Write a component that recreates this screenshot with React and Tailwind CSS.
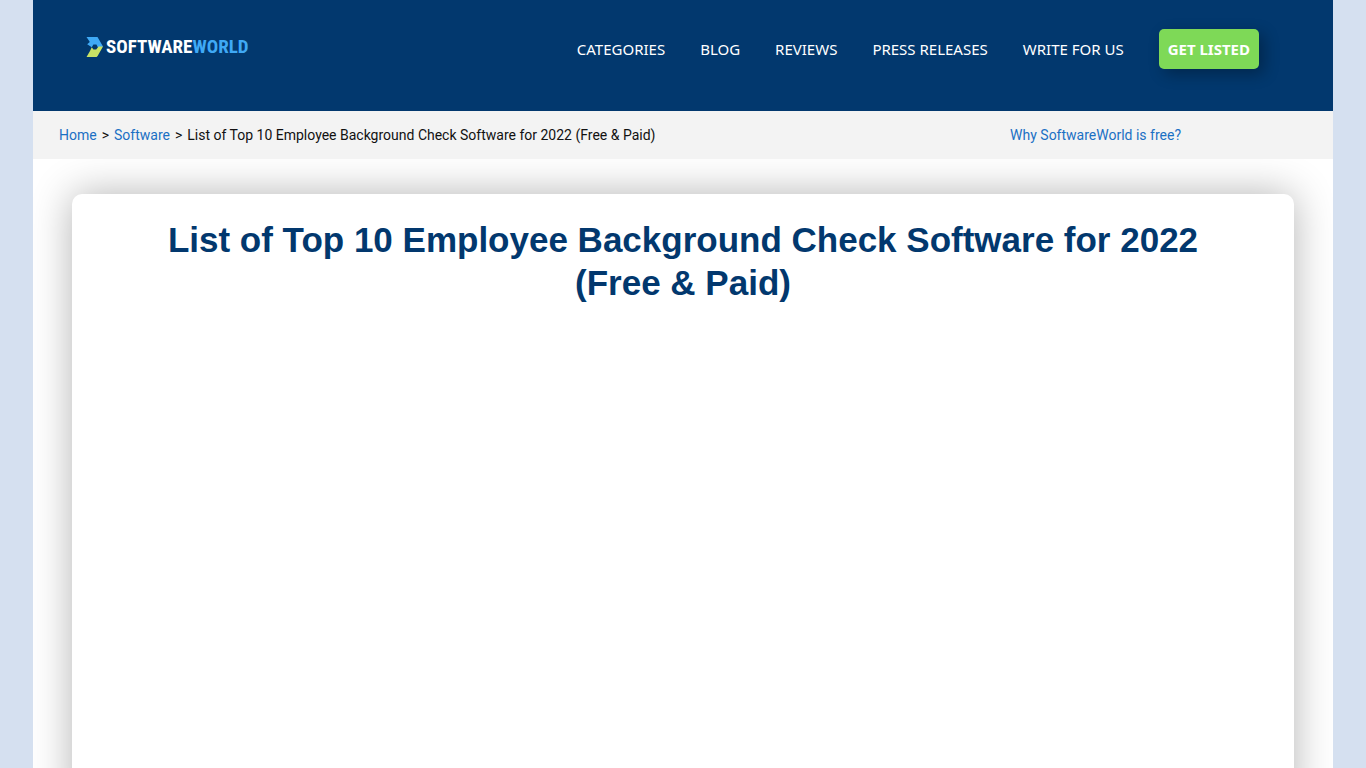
const navLinks = ["CATEGORIES", "BLOG", "REVIEWS", "PRESS RELEASES", "WRITE FOR US"];

function Logo() {
  return (
    <a href="#" aria-label="SoftwareWorld home" className="flex h-5 items-center gap-[3px]">
      <svg width="17" height="20" viewBox="0 0 17 20" aria-hidden="true">
        <path d="M.5 0H11.5L17 9.4 13 12.6 10.4 7.4H7.4L5.8 10.2 1.2 7.2 3.8 5z" fill="#3fa9f5" />
        <path d="M17 9.4 11.6 19 10.6 20H.5L4 14 5.8 10.2 7.4 12.4H10.2L12.6 9.6z" fill="#c9e265" />
      </svg>
      <span className="font-['Roboto_Condensed','Roboto',sans-serif] text-[19px] leading-5 font-bold">
        SOFTWARE<span className="text-[#3fa9f5]">WORLD</span>
      </span>
    </a>
  );
}

function Header() {
  return (
    <header className="flex items-start justify-between bg-[#02386e] pr-[74px] pb-[42px] pl-[53px] pt-[29px] text-white">
      <div className="pt-2">
        <Logo />
      </div>
      <nav className="flex items-center gap-[35px] font-['Noto_Sans',sans-serif] text-[15px]">
        {navLinks.map((label) => (
          <a key={label} href="#" className="whitespace-nowrap">{label}</a>
        ))}
        <a href="#" className="flex h-10 items-center rounded-[5px] bg-[#7ed957] px-[9px] font-bold whitespace-nowrap shadow-[5px_5px_15px_rgba(0,0,0,0.3)]">
          GET LISTED
        </a>
      </nav>
    </header>
  );
}

function Breadcrumbs() {
  return (
    <div className="flex h-12 items-center justify-between bg-[#f3f3f3] pr-[152px] pl-[26px] font-['Roboto',sans-serif] text-[14px] text-[#111111]">
      <nav aria-label="Breadcrumb" className="flex gap-[5px]">
        <a href="#" className="text-[#1b70c4]">Home</a>
        <span>&gt;</span>
        <a href="#" className="text-[#1b70c4]">Software</a>
        <span>&gt;</span>
        <span>List of Top 10 Employee Background Check Software for 2022 (Free &amp; Paid)</span>
      </nav>
      <a href="#" className="text-[#1b70c4]">Why SoftwareWorld is free?</a>
    </div>
  );
}

export default function App() {
  return (
    <div className="h-screen overflow-hidden bg-[#d5e0f0] px-[33px]">
      <div className="flex h-full flex-col overflow-hidden bg-white">
        <Header />
        <Breadcrumbs />
        <main className="flex grow flex-col overflow-hidden px-[39px] pt-[35px]">
          <section className="-mb-10 grow rounded-[10px] bg-white px-[80px] pt-6 shadow-[0_0_40px_rgba(0,0,0,0.3)]">
            <h1 className="text-center font-['Liberation_Sans',sans-serif] text-[35px] leading-[43px] font-bold text-[#02386e]">
              List of Top 10 Employee Background Check Software for 2022 (Free &amp; Paid)
            </h1>
          </section>
        </main>
      </div>
    </div>
  );
}
